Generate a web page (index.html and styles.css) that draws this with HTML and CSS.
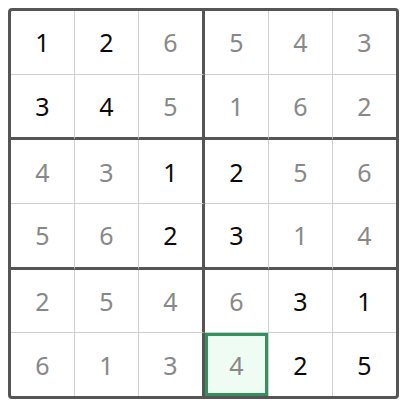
FILE: index.html
```html
<!DOCTYPE html>
<html>
<head>
<meta charset="utf-8">
<link rel="stylesheet" href="styles.css">
</head>
<body>
<div class="board">
  <div class="cell given">1</div><div class="cell given">2</div><div class="cell fill box-r">6</div><div class="cell fill">5</div><div class="cell fill">4</div><div class="cell fill last-c">3</div>
  <div class="cell given row-b">3</div><div class="cell given row-b">4</div><div class="cell fill box-r row-b">5</div><div class="cell fill row-b">1</div><div class="cell fill row-b">6</div><div class="cell fill last-c row-b">2</div>
  <div class="cell fill">4</div><div class="cell fill">3</div><div class="cell given box-r">1</div><div class="cell given">2</div><div class="cell fill">5</div><div class="cell fill last-c">6</div>
  <div class="cell fill row-b">5</div><div class="cell fill row-b">6</div><div class="cell given box-r row-b">2</div><div class="cell given row-b">3</div><div class="cell fill row-b">1</div><div class="cell fill last-c row-b">4</div>
  <div class="cell fill">2</div><div class="cell fill">5</div><div class="cell fill box-r">4</div><div class="cell fill">6</div><div class="cell given">3</div><div class="cell given last-c">1</div>
  <div class="cell fill last-r">6</div><div class="cell fill last-r">1</div><div class="cell fill box-r last-r">3</div><div class="cell fill last-r selected">4</div><div class="cell given last-r">2</div><div class="cell given last-c last-r">5</div>
</div>
</body>
</html>
```

FILE: styles.css
```css
html, body {
  margin: 0;
  padding: 0;
  background: #ffffff;
}
body {
  padding: 8px;
  font-family: "Noto Sans", "Open Sans", sans-serif;
}
.board {
  display: grid;
  grid-template-columns: repeat(6, auto);
  width: max-content;
  border: 3px solid #555555;
  border-radius: 4px;
  background: #ffffff;
}
.cell {
  width: 63px;
  height: 62.6667px;
  display: flex;
  align-items: center;
  justify-content: center;
  font-size: 25px;
  border-right: 1px solid #cfcfcf;
  border-bottom: 1px solid #cfcfcf;
  box-sizing: content-box;
}
.given {
  color: #0a0a0a;
}
.fill {
  color: #888888;
}
.box-r {
  border-right: 3px solid #555555;
}
.row-b {
  border-bottom: 3px solid #555555;
}
.last-c {
  border-right: none;
}
.last-r {
  border-bottom: none;
}
.selected {
  background: #effcf3;
  box-shadow: inset 0 0 0 3px #34905e;
}
```
